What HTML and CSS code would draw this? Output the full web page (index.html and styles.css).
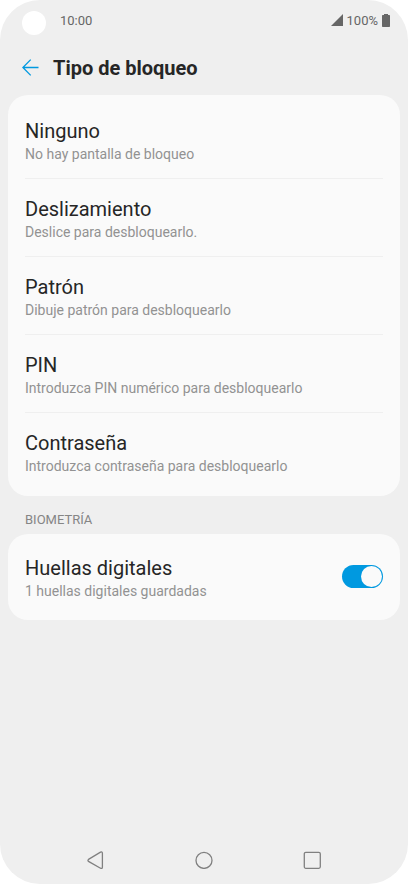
FILE: index.html
```html
<!DOCTYPE html>
<html lang="es">
<head>
    <meta charset="UTF-8">
    <meta name="viewport" content="width=device-width, initial-scale=1.0">
    <title>Tipo de bloqueo</title>
    <link rel="stylesheet" href="styles.css">
</head>
<body>
    <div class="screen">
        <!-- Barra de estado -->
        <div class="status-bar">
            <span class="camera"></span>
            <span class="time">10:00</span>
            <svg class="signal" width="12" height="12" viewBox="0 0 12 12" fill="currentColor">
                <path d="M12 0v12H0z"/>
            </svg>
            <span class="battery-level">100%</span>
            <svg class="battery" width="8" height="13" viewBox="0 0 8 13" fill="currentColor">
                <path d="M2 0h4v1h1.300q.7 0 .7.700v10.600q0 .7-.7.700H.7q-.7 0-.7-.700V1.700Q0 1 .7 1H2z"/>
            </svg>
        </div>

        <header class="header">
            <button class="back" type="button" aria-label="Atrás">
                <svg width="17" height="17" viewBox="0 0 17 17" fill="none" stroke="currentColor" stroke-width="1.300">
                    <path d="M8.700 .6L.9 8.500l7.800 7.900M.9 8.500H16.500"/>
                </svg>
            </button>
            <h1 class="title">Tipo de bloqueo</h1>
        </header>

        <main class="content">
            <ul class="card card-list">
                <li class="row">
                    <button class="option" type="button">
                        <span class="option-title">Ninguno</span>
                        <span class="option-text">No hay pantalla de bloqueo</span>
                    </button>
                </li>
                <li class="row">
                    <button class="option" type="button">
                        <span class="option-title">Deslizamiento</span>
                        <span class="option-text">Deslice para desbloquearlo.</span>
                    </button>
                </li>
                <li class="row">
                    <button class="option" type="button">
                        <span class="option-title">Patrón</span>
                        <span class="option-text">Dibuje patrón para desbloquearlo</span>
                    </button>
                </li>
                <li class="row">
                    <button class="option" type="button">
                        <span class="option-title">PIN</span>
                        <span class="option-text">Introduzca PIN numérico para desbloquearlo</span>
                    </button>
                </li>
                <li class="row">
                    <button class="option" type="button">
                        <span class="option-title">Contraseña</span>
                        <span class="option-text">Introduzca contraseña para desbloquearlo</span>
                    </button>
                </li>
            </ul>

            <h2 class="section-title">BIOMETRÍA</h2>

            <div class="card">
                <label class="row row-switch" for="huellas">
                    <span class="option">
                        <span class="option-title">Huellas digitales</span>
                        <span class="option-text">1 huellas digitales guardadas</span>
                    </span>
                    <input class="switch" type="checkbox" id="huellas" checked>
                </label>
            </div>
        </main>

        <!-- Navegación del sistema -->
        <nav class="nav-bar">
            <button class="nav-button" type="button" aria-label="Volver">
                <svg width="18" height="18" viewBox="0 0 18 18">
                    <path d="M1.500 8.400L13.500 1.200Q15.400 .4 15.400 2.200V16.200Q15.400 18 13.500 17.200L1.500 10.400Q.4 9.400 1.500 8.400z"/>
                </svg>
            </button>
            <button class="nav-button" type="button" aria-label="Inicio">
                <svg width="18" height="18" viewBox="0 0 18 18">
                    <circle cx="9" cy="9.400" r="8"/>
                </svg>
            </button>
            <button class="nav-button" type="button" aria-label="Recientes">
                <svg width="18" height="18" viewBox="0 0 18 18">
                    <rect x="1.300" y="1.300" width="16" height="16" rx="1.500"/>
                </svg>
            </button>
        </nav>
    </div>
</body>
</html>
```

FILE: styles.css
```css
* {
    margin: 0;
    padding: 0;
    box-sizing: border-box;
}

:root {
    --background: #efefef;
    --card: #fafafa;
    --foreground: #262626;
    --muted: #929292;
    --icon: #666;
    --border: #efefef;
    --primary: #0099e0;
}

body {
    font-family: Roboto, "Noto Sans", sans-serif;
    background-color: #fff;
    color: var(--foreground);
}

button {
    font: inherit;
    color: inherit;
    background: none;
    border: none;
    cursor: pointer;
}

svg {
    display: block;
}

.screen {
    display: flex;
    flex-direction: column;
    min-height: 100vh;
    background-color: var(--background);
    border-radius: 40px;
}

/* Barra de estado */
.status-bar {
    display: flex;
    align-items: center;
    height: 40px;
    padding: 0 18px 0 22px;
    font-size: 13px;
    color: var(--icon);
}

.camera {
    width: 24px;
    height: 24px;
    margin: 6px 14px 0 0;
    border-radius: 50%;
    background-color: #fff;
}

.time {
    margin-right: auto;
}

.battery-level {
    margin: 0 4px;
}

/* Cabecera */
.header {
    display: flex;
    align-items: center;
    gap: 14px;
    height: 55px;
    padding: 0 22px;
}

.back {
    color: var(--primary);
}

.title {
    font-size: 20px;
    line-height: 24px;
    font-weight: bold;
}

.content {
    flex: 1;
    padding: 0 8px;
}

/* Tarjetas */
.card {
    padding: 4px 17px;
    border-radius: 20px;
    background-color: var(--card);
    list-style: none;
}

.card-list {
    padding: 6px 17px 5px;
}

.row {
    border-bottom: 1px solid var(--border);
}

.row:last-child {
    border-bottom-color: transparent;
}

.row-switch {
    display: flex;
    align-items: center;
    justify-content: space-between;
}

.option {
    display: block;
    width: 100%;
    padding: 18px 0 13px;
    text-align: left;
}

.option-title {
    display: block;
    font-size: 20px;
    line-height: 24px;
}

.option-text {
    display: block;
    font-size: 14px;
    line-height: 22px;
    color: var(--muted);
}

.section-title {
    padding: 16px 17px 6px;
    font-size: 13px;
    line-height: 16px;
    font-weight: normal;
    color: #858585;
}

/* Interruptor */
.switch {
    appearance: none;
    flex: none;
    display: flex;
    width: 41px;
    height: 23px;
    padding: 1px;
    border-radius: 12px;
    background-color: #bbb;
    cursor: pointer;
}

.switch::before {
    content: "";
    width: 21px;
    height: 21px;
    border-radius: 50%;
    background-color: var(--card);
}

.switch:checked {
    justify-content: flex-end;
    background-color: var(--primary);
}

/* Navegación del sistema */
.nav-bar {
    display: flex;
    justify-content: center;
    height: 48px;
}

.nav-button {
    display: flex;
    align-items: center;
    justify-content: center;
    width: 108px;
}

.nav-button svg {
    fill: none;
    stroke: #808080;
    stroke-width: 1.3;
}
```
